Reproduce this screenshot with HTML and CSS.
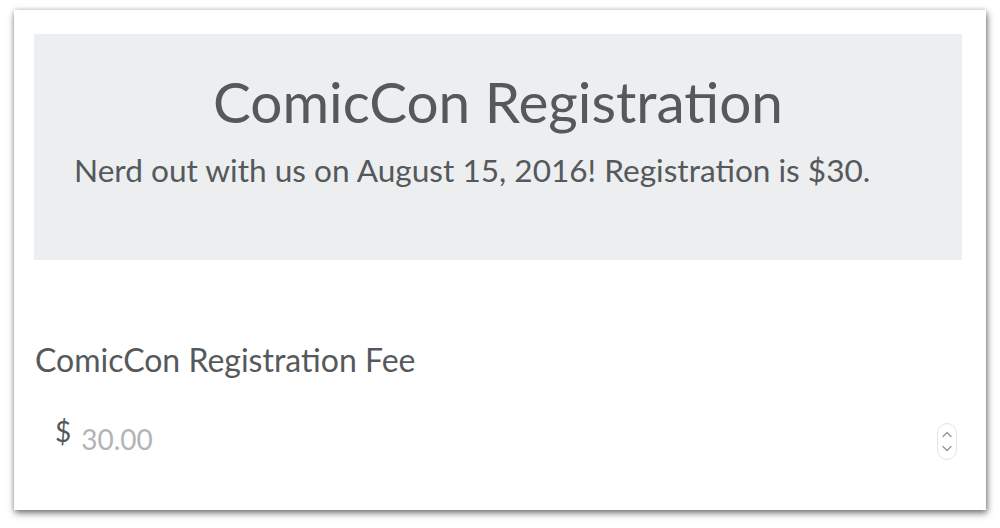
FILE: index.html
```html
<!DOCTYPE html>
<html>
<head>
<meta charset="utf-8">
<link rel="stylesheet" href="styles.css">
</head>
<body>
<div class="card">
  <div class="jumbotron">
    <h1 class="title">ComicCon Registration</h1>
    <p class="lead">Nerd out with us on August 15, 2016! Registration is $30.</p>
  </div>
  <div class="field">
    <label class="label" for="fee">ComicCon Registration Fee</label>
    <div class="input-row">
      <span class="currency">$</span>
      <input id="fee" class="amount" type="text" placeholder="30.00">
      <span class="spinner">
        <svg width="18" height="35" viewBox="0 0 18 35"><path d="M5 12.5 L9 8.5 L13 12.5" fill="none" stroke="#9c9c9c" stroke-width="1.5" stroke-linecap="round" stroke-linejoin="round"/><path d="M5 22.5 L9 26.5 L13 22.5" fill="none" stroke="#9c9c9c" stroke-width="1.5" stroke-linecap="round" stroke-linejoin="round"/></svg>
      </span>
    </div>
  </div>
</div>
</body>
</html>
```
FILE: styles.css
```css
html, body {
  margin: 0;
  padding: 0;
  background: #ffffff;
}
body {
  width: 1000px;
  height: 528px;
  overflow: hidden;
  font-family: Lato, "Open Sans", sans-serif;
  color: #55595c;
}
.card {
  margin: 10px 0 0 14px;
  width: 972px;
  height: 500px;
  box-sizing: border-box;
  padding: 24px 24px 0 20px;
  background: #fff;
  box-shadow: 1px 3px 7px rgba(0, 0, 0, 0.55), 0 0 4px rgba(0, 0, 0, 0.15);
}
.jumbotron {
  background: #eceeef;
  height: 226px;
  box-sizing: border-box;
  padding: 37px 40px 0 40px;
}
.title {
  margin: 0;
  text-align: center;
  font-weight: 400;
  font-size: 56.7px;
  line-height: 60px;
}
.lead {
  margin: 20px 0 0 0;
  font-size: 31.6px;
  line-height: 38px;
}
.field {
  padding-top: 81px;
}
.label {
  display: block;
  font-size: 32px;
  line-height: 38px;
  margin-left: 1px;
}
.input-row {
  display: flex;
  align-items: flex-start;
  margin-top: 35px;
  padding-left: 21px;
  padding-right: 5px;
}
.currency {
  font-size: 28px;
  line-height: 34px;
}
.amount {
  flex: 1;
  border: none;
  outline: none;
  background: transparent;
  font-family: Lato, sans-serif;
  font-size: 28px;
  line-height: 34px;
  height: 34px;
  padding: 0;
  margin: 8px 0 0 10px;
  color: #55595c;
}
.amount::placeholder {
  color: #b2b4b6;
}
.spinner {
  display: flex;
  width: 20px;
  height: 37px;
  box-sizing: border-box;
  margin-top: 9px;
  border: 1px solid #e4e4e4;
  border-radius: 10px;
  justify-content: center;
  align-items: center;
}
```
